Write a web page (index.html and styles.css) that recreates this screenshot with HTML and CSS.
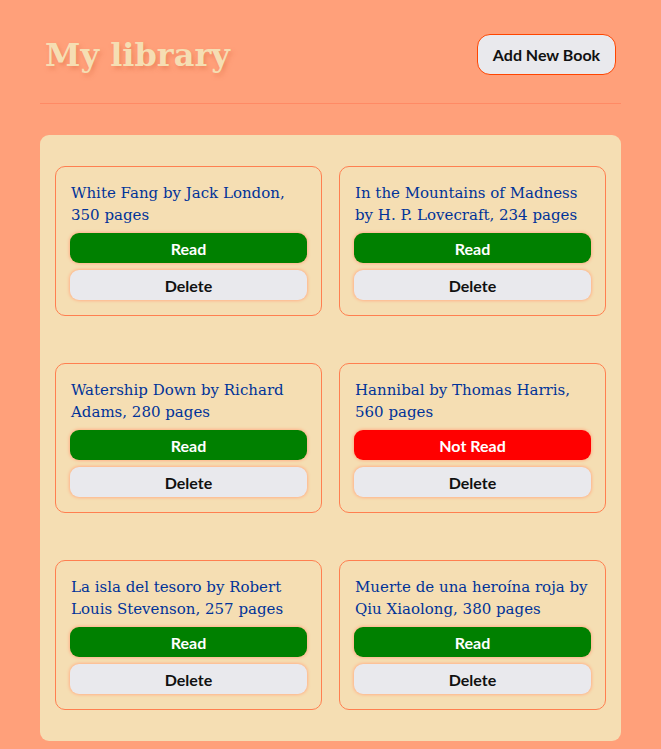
FILE: index.html
```html
<!DOCTYPE html>
<html lang="en">
<head>
<meta charset="utf-8">
<title>My library</title>
<link rel="stylesheet" href="styles.css">
</head>
<body>
<header class="header">
  <h1 class="title">My library</h1>
  <button class="add-btn">Add New Book</button>
</header>
<hr class="divider">
<main class="library">
  <div class="card">
    <p class="book">White Fang by Jack London, 350 pages</p>
    <button class="btn read">Read</button>
    <button class="btn delete">Delete</button>
  </div>
  <div class="card">
    <p class="book">In the Mountains of Madness by H. P. Lovecraft, 234 pages</p>
    <button class="btn read">Read</button>
    <button class="btn delete">Delete</button>
  </div>
  <div class="card">
    <p class="book">Watership Down by Richard Adams, 280 pages</p>
    <button class="btn read">Read</button>
    <button class="btn delete">Delete</button>
  </div>
  <div class="card">
    <p class="book">Hannibal by Thomas Harris, 560 pages</p>
    <button class="btn notread">Not Read</button>
    <button class="btn delete">Delete</button>
  </div>
  <div class="card">
    <p class="book">La isla del tesoro by Robert Louis Stevenson, 257 pages</p>
    <button class="btn read">Read</button>
    <button class="btn delete">Delete</button>
  </div>
  <div class="card">
    <p class="book">Muerte de una heroína roja by Qiu Xiaolong, 380 pages</p>
    <button class="btn read">Read</button>
    <button class="btn delete">Delete</button>
  </div>
</main>
</body>
</html>
```
FILE: styles.css
```css
html, body {
  margin: 0;
  padding: 0;
}
body {
  background: #ffa07a;
  padding: 0 40px 8px 40px;
  font-family: "DejaVu Serif", serif;
}
.header {
  display: flex;
  justify-content: space-between;
  align-items: center;
  height: 103px;
  padding: 8px 5px 0 5px;
  box-sizing: border-box;
}
.title {
  margin: 0;
  font-family: "DejaVu Serif", serif;
  font-weight: bold;
  font-size: 32px;
  color: #f5deb3;
  text-shadow: 2px 3px 4px rgba(230, 120, 80, 0.6);
  padding-bottom: 2px;
}
.add-btn {
  font-family: "Lato", sans-serif;
  font-weight: bold;
  font-size: 16px;
  color: #111;
  background: #e9e9ed;
  border: 1px solid #ff4500;
  border-radius: 13px;
  width: 139px;
  height: 41px;
  padding: 0;
  margin-bottom: 3px;
}
.divider {
  margin: 0;
  border: none;
  border-top: 1px solid #ff8a65;
  height: 0;
}
.library {
  margin-top: 31px;
  background: #f5deb3;
  border-radius: 9px;
  padding: 31px 15px;
  display: grid;
  grid-template-columns: 1fr 1fr;
  column-gap: 17px;
  row-gap: 47px;
}
.card {
  border: 1px solid #ff7f50;
  border-radius: 10px;
  padding: 15px 14px 15px 14px;
  display: flex;
  flex-direction: column;
  gap: 7px;
}
.book {
  margin: 0 0 0 1px;
  font-size: 15px;
  line-height: 22px;
  color: #003399;
}
.btn {
  font-family: "Lato", sans-serif;
  font-weight: bold;
  font-size: 16px;
  height: 30px;
  border: none;
  border-radius: 9px;
  box-shadow: 0 0 3px 1px #ffb48a;
  padding: 0;
}
.read {
  background: #008000;
  color: #fff;
}
.notread {
  background: #ff0000;
  color: #fff;
}
.delete {
  background: #e9e9ed;
  color: #111;
}
```
